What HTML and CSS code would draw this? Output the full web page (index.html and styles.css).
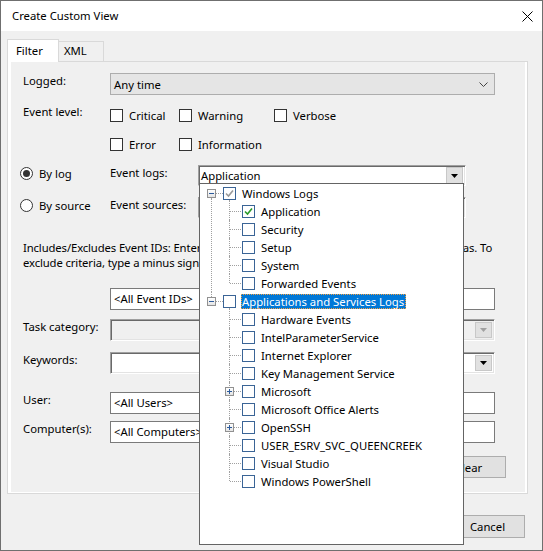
FILE: index.html
```html
<!DOCTYPE html>
<html lang="en">
<head>
  <meta charset="UTF-8" />
  <title>Create Custom View</title>
  <link rel="stylesheet" href="styles.css">
</head>
<body>

  <div class="window">

    <!-- title bar -->
    <div class="titlebar">
      <span class="title">Create Custom View</span>
      <svg class="close" width="11" height="11" viewBox="0 0 11 11">
        <path d="M0.5 0.5 L10.5 10.5 M10.5 0.5 L0.5 10.5" stroke="#000" stroke-width="1" fill="none" />
      </svg>
    </div>

    <div class="dialog">
      <div class="tabs">
        <div class="tab active">Filter</div>
        <div class="tab">XML</div>
      </div>

      <div class="tab-panel">
        <div class="page">

          <div class="row">
            <span class="lbl">Logged:</span>
            <div class="combo flat">
              <span>Any time</span>
              <svg width="9" height="5" viewBox="0 0 9 5"><path d="M0.5 0.5 L4.5 4.5 L8.5 0.5" stroke="#444" fill="none" /></svg>
            </div>
          </div>

          <div class="row levels">
            <span class="lbl">Event level:</span>
            <div class="checks">
              <span class="check"><i class="box"></i>Critical</span>
              <span class="check"><i class="box"></i>Warning</span>
              <span class="check"><i class="box"></i>Verbose</span>
              <span class="check"><i class="box"></i>Error</span>
              <span class="check"><i class="box"></i>Information</span>
            </div>
          </div>

          <div class="row pick bylog">
            <span class="radio on"><i></i>By log</span>
            <span class="lbl">Event logs:</span>
            <div class="combo sunken">
              <span>Application</span>
              <b class="drop"><svg width="7" height="4" viewBox="0 0 7 4"><path d="M0 0 H7 L3.5 4 Z" fill="#000" /></svg></b>
            </div>
          </div>

          <div class="row pick bysource">
            <span class="radio"><i></i>By source</span>
            <span class="lbl">Event sources:</span>
            <div class="combo sunken disabled">
              <span></span>
              <b class="drop"><svg width="7" height="4" viewBox="0 0 7 4"><path d="M0 0 H7 L3.5 4 Z" fill="#a0a0a0" /></svg></b>
            </div>
          </div>

          <p class="desc">Includes/Excludes Event IDs: Enter ID numbers and/or ID ranges separated by commas. To<br>exclude criteria, type a minus sign first. For example 1,3,5-99,-76</p>

          <div class="row ids">
            <span class="lbl"></span>
            <div class="field">&lt;All Event IDs&gt;</div>
          </div>

          <div class="row task">
            <span class="lbl">Task category:</span>
            <div class="combo sunken disabled tall">
              <span></span>
              <b class="drop"><svg width="7" height="4" viewBox="0 0 7 4"><path d="M0 0 H7 L3.5 4 Z" fill="#a0a0a0" /></svg></b>
            </div>
          </div>

          <div class="row keywords">
            <span class="lbl">Keywords:</span>
            <div class="combo sunken tall">
              <span></span>
              <b class="drop"><svg width="7" height="4" viewBox="0 0 7 4"><path d="M0 0 H7 L3.5 4 Z" fill="#000" /></svg></b>
            </div>
          </div>

          <div class="row user">
            <span class="lbl">User:</span>
            <div class="field">&lt;All Users&gt;</div>
          </div>

          <div class="row computer">
            <span class="lbl">Computer(s):</span>
            <div class="field">&lt;All Computers&gt;</div>
          </div>

          <div class="clear-row">
            <button class="btn">Clear</button>
          </div>

        </div>
      </div>

      <div class="buttons">
        <button class="btn">OK</button>
        <button class="btn">Cancel</button>
      </div>
    </div>

    <!-- open dropdown of the Event logs combo -->
    <div class="popup">
      <div class="tree">

        <div class="branch">
          <div class="node">
            <span class="exp"></span><span class="hline"></span>
            <span class="cb"><svg width="11" height="11" viewBox="0 0 11 11"><path d="M2 5.5 L4.5 8 L9 2.5" stroke="#9a9a9a" stroke-width="1.6" fill="none" /></svg></span>
            <span class="text">Windows Logs</span>
          </div>
          <div class="kids">
            <div class="node">
              <span class="cb"><svg width="11" height="11" viewBox="0 0 11 11"><path d="M2 5.5 L4.5 8 L9 2.5" stroke="#2a9a2a" stroke-width="1.6" fill="none" /></svg></span>
              <span class="text">Application</span>
            </div>
            <div class="node"><span class="cb"></span><span class="text">Security</span></div>
            <div class="node"><span class="cb"></span><span class="text">Setup</span></div>
            <div class="node"><span class="cb"></span><span class="text">System</span></div>
            <div class="node"><span class="cb"></span><span class="text">Forwarded Events</span></div>
          </div>
        </div>

        <div class="branch last">
          <div class="node">
            <span class="exp"></span><span class="hline"></span>
            <span class="cb"></span>
            <span class="text selected">Applications and Services Logs</span>
          </div>
          <div class="kids">
            <div class="node"><span class="cb"></span><span class="text">Hardware Events</span></div>
            <div class="node"><span class="cb"></span><span class="text">IntelParameterService</span></div>
            <div class="node"><span class="cb"></span><span class="text">Internet Explorer</span></div>
            <div class="node"><span class="cb"></span><span class="text">Key Management Service</span></div>
            <div class="node"><span class="exp plus"></span><span class="cb"></span><span class="text">Microsoft</span></div>
            <div class="node"><span class="cb"></span><span class="text">Microsoft Office Alerts</span></div>
            <div class="node"><span class="exp plus"></span><span class="cb"></span><span class="text">OpenSSH</span></div>
            <div class="node"><span class="cb"></span><span class="text">USER_ESRV_SVC_QUEENCREEK</span></div>
            <div class="node"><span class="cb"></span><span class="text">Visual Studio</span></div>
            <div class="node"><span class="cb"></span><span class="text">Windows PowerShell</span></div>
          </div>
        </div>

      </div>
    </div>

  </div>

</body>
</html>
```

FILE: styles.css
```css
body {
  margin: 0;
  width: 543px;
  height: 551px;
  overflow: hidden;
  font-family: "Noto Sans", "Open Sans", sans-serif;
  font-size: 11.3px;
  color: #000;
}

.window {
  position: relative;
  width: 543px;
  height: 551px;
  box-sizing: border-box;
  border: 1px solid #6f6f6f;
  background: #f0f0f0;
}

/* title bar */
.titlebar {
  height: 30px;
  background: #fff;
  display: flex;
  align-items: center;
  justify-content: space-between;
  padding: 0 9px 0 11px;
}

.title {
  line-height: 16px;
}

/* tabs */
.dialog {
  padding: 8px 0 0 6px;
}

.tabs {
  display: flex;
  align-items: flex-start;
  height: 23px;
  margin-bottom: -1px;
}

.tab {
  box-sizing: border-box;
  height: 20px;
  margin-top: 2px;
  border: 1px solid #d9d9d9;
  border-bottom: none;
  line-height: 18px;
}

.tab.active {
  position: relative;
  z-index: 1;
  width: 52px;
  height: 23px;
  margin-top: 0;
  padding-left: 8px;
  line-height: 21px;
  background: #fff;
}

.tab:not(.active) {
  width: 46px;
  margin-left: -1px;
  padding-left: 5px;
}

.tab-panel {
  width: 521px;
  box-sizing: border-box;
  border: 1px solid #d9d9d9;
  background: #fff;
  padding: 0 2px 1px 3px;
}

.page {
  background: #f0f0f0;
  padding: 11px 30px 14px 12px;
}

/* form rows */
.row {
  display: grid;
  grid-template-columns: 87px 1fr;
  align-items: start;
}

.lbl {
  line-height: 16px;
  white-space: nowrap;
}

.levels { margin-top: 9px; }
.bylog { margin-top: 13px; }
.bysource { margin-top: 11px; }
.ids { margin-top: 18px; }
.task { margin-top: 9px; }
.keywords { margin-top: 11px; }
.user { margin-top: 18px; }
.computer { margin-top: 7px; }

.checks {
  display: grid;
  grid-template-columns: 69px 95px auto;
  row-gap: 13px;
  padding-top: 3px;
}

.check {
  display: flex;
  align-items: center;
  gap: 6px;
  height: 16px;
}

.box {
  width: 13px;
  height: 13px;
  box-sizing: border-box;
  border: 1px solid #333;
  background: #fff;
}

.pick {
  grid-template-columns: 87px 88px 268px;
}

.radio {
  display: flex;
  align-items: center;
  gap: 6px;
  height: 16px;
  margin-left: -3px;
  white-space: nowrap;
}

.radio i {
  width: 13px;
  height: 13px;
  box-sizing: border-box;
  border: 1px solid #333;
  border-radius: 50%;
  background: #fff;
  display: flex;
  align-items: center;
  justify-content: center;
}

.radio.on i::after {
  content: "";
  width: 7px;
  height: 7px;
  border-radius: 50%;
  background: #333;
}

/* combo boxes */
.combo {
  position: relative;
  display: flex;
  align-items: center;
  justify-content: space-between;
  box-sizing: border-box;
  height: 22px;
}

.combo.flat {
  background: #e5e5e5;
  border: 1px solid #adadad;
  padding: 0 6px 0 3px;
}

.combo.sunken {
  height: 21px;
  background: #fff;
  border: 1px solid;
  border-color: #a0a0a0 #fff #fff #a0a0a0;
  box-shadow: inset 1px 1px 0 #696969, inset -1px -1px 0 #e3e3e3;
  padding: 0 2px 0 2px;
}

.combo.sunken.tall {
  height: 22px;
}

.combo.disabled {
  background: #f0f0f0;
}

.drop {
  width: 17px;
  height: 17px;
  box-sizing: border-box;
  background: #e1e1e1;
  border: 1px solid #c8c8c8;
  display: flex;
  align-items: center;
  justify-content: center;
}

.combo.tall .drop {
  height: 16px;
}

.field {
  height: 22px;
  box-sizing: border-box;
  border: 1px solid #7a7a7a;
  background: #fff;
  padding-left: 3px;
  line-height: 20px;
  white-space: nowrap;
  overflow: hidden;
}

.desc {
  margin: 22px 0 0;
  line-height: 15px;
  white-space: nowrap;
  letter-spacing: -0.12px;
}

.clear-row {
  display: flex;
  justify-content: flex-end;
  margin: 13px -11px 0 0;
}

.btn {
  width: 75px;
  height: 22px;
  box-sizing: border-box;
  background: #e1e1e1;
  border: 1px solid #adadad;
  font: inherit;
  color: #000;
  padding: 0;
}

.buttons {
  display: flex;
  justify-content: flex-end;
  gap: 6px;
  margin-top: 21px;
  padding-right: 17px;
}

.buttons .btn {
  height: 23px;
}

/* dropdown tree */
.popup {
  position: absolute;
  left: 198px;
  top: 182px;
  width: 265px;
  height: 362px;
  box-sizing: border-box;
  border: 1px solid #646464;
  background: #fff;
  z-index: 5;
}

.tree {
  padding-left: 7px;
}

.branch {
  position: relative;
}

.branch::before {
  content: "";
  position: absolute;
  left: 4px;
  top: 14px;
  bottom: 0;
  border-left: 1px dotted #a0a0a0;
}

.branch.last::before {
  top: 0;
  bottom: auto;
  height: 5px;
}

.node {
  position: relative;
  display: flex;
  align-items: center;
  height: 18px;
  white-space: nowrap;
}

.exp {
  position: relative;
  flex: none;
  width: 9px;
  height: 9px;
  box-sizing: border-box;
  border: 1px solid #919191;
  background: linear-gradient(#fff, #e4e4e4);
}

.exp::before {
  content: "";
  position: absolute;
  left: 1px;
  top: 3px;
  width: 5px;
  height: 1px;
  background: #2c5b9c;
}

.exp.plus::after {
  content: "";
  position: absolute;
  left: 3px;
  top: 1px;
  width: 1px;
  height: 5px;
  background: #2c5b9c;
}

.hline {
  flex: none;
  width: 7px;
  border-top: 1px dotted #a0a0a0;
}

.cb {
  flex: none;
  width: 13px;
  height: 13px;
  box-sizing: border-box;
  border: 1px solid #3a6496;
  background: #fff;
  display: flex;
  align-items: center;
  justify-content: center;
}

.text {
  margin-left: 6px;
  line-height: 15px;
}

.text.selected {
  margin-left: 5px;
  padding: 0 2px 0 1px;
  background: #0078d7;
  color: #fff;
  outline: 1px dotted #f5a040;
  outline-offset: -1px;
}

.kids .node {
  padding-left: 35px;
}

.kids .node::before {
  content: "";
  position: absolute;
  left: 22px;
  top: 0;
  bottom: 0;
  border-left: 1px dotted #a0a0a0;
}

.kids .node:first-child::before {
  top: -2px;
}

.kids .node:last-child::before {
  bottom: 9px;
}

.kids .node::after {
  content: "";
  position: absolute;
  left: 23px;
  top: 9px;
  width: 11px;
  border-top: 1px dotted #a0a0a0;
}

.kids .exp {
  position: absolute;
  left: 18px;
  top: 5px;
  z-index: 1;
}
```
